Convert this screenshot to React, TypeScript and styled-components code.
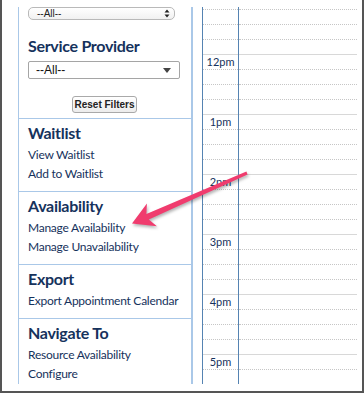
import styled, { createGlobalStyle } from 'styled-components';

const GlobalStyle = createGlobalStyle`
  html, body {
    margin: 0;
    padding: 0;
    background: #ffffff;
  }
  body {
    font-family: Lato, "Open Sans", sans-serif;
    color: #16325c;
  }
`;

const NAV_SECTIONS = [
  { title: 'Waitlist', links: ['View Waitlist', 'Add to Waitlist'] },
  { title: 'Availability', links: ['Manage Availability', 'Manage Unavailability'] },
  { title: 'Export', links: ['Export Appointment Calendar'] },
  { title: 'Navigate To', links: ['Resource Availability', 'Configure'] },
];

// 15 minute slots, an hour line every 4th one
const HOURS = ['12pm', '1pm', '2pm', '3pm', '4pm', '5pm'];
const SLOTS = Array.from({ length: 25 }, (_, i) => ({
  hour: i % 4 === 3,
  label: i % 4 === 3 ? HOURS[(i - 3) / 4] : '',
}));

const App = () => {
  return (
    <>
      <GlobalStyle />
      <Frame>
        <Sidebar>
          <FilterSection>
            <MacSelect>
              <span>--All--</span>
              <svg width="6" height="9" viewBox="0 0 6 9">
                <path d="M3 0.5 L5.5 3.5 H0.5 Z M3 8.5 L5.5 5.5 H0.5 Z" fill="#222" />
              </svg>
            </MacSelect>
            <Heading $filter>Service Provider</Heading>
            <Select>
              <span>--All--</span>
              <svg width="8" height="5" viewBox="0 0 8 5">
                <path d="M0 0 H8 L4 5 Z" fill="#444" />
              </svg>
            </Select>
            <ResetButton>Reset Filters</ResetButton>
          </FilterSection>
          {NAV_SECTIONS.map(section => (
            <NavSection key={section.title}>
              <Heading>{section.title}</Heading>
              {section.links.map(link => (
                <NavLink key={link}>{link}</NavLink>
              ))}
            </NavSection>
          ))}
        </Sidebar>
        <Calendar>
          <TimeColumn>
            <Spacer />
            {SLOTS.map((slot, i) => (
              <Slot key={i} $hour={slot.hour}>
                {slot.label}
              </Slot>
            ))}
          </TimeColumn>
          <DayColumn>
            <Spacer />
            {SLOTS.map((slot, i) => (
              <Slot key={i} $hour={slot.hour} />
            ))}
          </DayColumn>
        </Calendar>
        <Arrow width="364" height="394" viewBox="0 0 364 394">
          <polygon
            points="130,223.5 144.9,203.4 144.4,214 244.4,171.6 245.6,174.4 146.8,219.4 154.9,226.2"
            fill="#f03c6e"
          />
        </Arrow>
      </Frame>
    </>
  );
};

export default App;

const Frame = styled.div`
  position: relative;
  box-sizing: border-box;
  width: 364px;
  height: 393px;
  padding: 7px 5px 7px 16px;
  border: 2px solid #555555;
  border-top: none;
  display: flex;
  gap: 9px;
  background: #ffffff;
`;

const Sidebar = styled.div`
  width: 172px;
  border-left: 1px solid #aac8e8;
  border-right: 2px solid #aac8e8;
  overflow: hidden;
`;

const FilterSection = styled.div`
  padding: 0 10px 5px 9px;
  display: flex;
  flex-direction: column;
  align-items: flex-start;
`;

const MacSelect = styled.div`
  box-sizing: border-box;
  width: 147px;
  height: 13px;
  border: 1px solid #b9b9b9;
  border-radius: 5px;
  background: linear-gradient(#ffffff, #f1f1f1);
  display: flex;
  align-items: center;
  justify-content: space-between;
  padding: 0 4px 0 8px;
  font-family: "Liberation Sans", Arial, sans-serif;
  font-size: 10px;
  color: #222;
`;

const Select = styled.div`
  box-sizing: border-box;
  width: 152px;
  height: 18px;
  border: 1px solid #a5a5a5;
  border-radius: 2px;
  background: #ffffff;
  display: flex;
  align-items: center;
  justify-content: space-between;
  padding: 0 8px 0 7px;
  font-family: "Liberation Sans", Arial, sans-serif;
  font-size: 12px;
  color: #111;
`;

const ResetButton = styled.button`
  align-self: center;
  margin-top: 17px;
  box-sizing: border-box;
  width: 65px;
  height: 17px;
  padding: 0;
  border: 1px solid #a9a9a9;
  border-radius: 3px;
  background: linear-gradient(#ffffff, #ececec);
  font-family: "Liberation Sans", Arial, sans-serif;
  font-size: 10px;
  font-weight: bold;
  color: #222;
`;

const NavSection = styled.div`
  border-top: 1px solid #aac8e8;
  padding: 4px 10px 8px 9px;
`;

const Heading = styled.div<{ $filter?: boolean }>`
  font-size: 16px;
  line-height: 20px;
  font-weight: bold;
  letter-spacing: -0.3px;
  color: #16325c;
  margin: ${p => (p.$filter ? '16px 0 5px' : '0 0 2px')};
`;

const NavLink = styled.div`
  font-size: 12px;
  line-height: 19px;
  letter-spacing: -0.25px;
  color: #16325c;
  white-space: nowrap;
`;

const Calendar = styled.div`
  flex: 1;
  display: flex;
  overflow: hidden;
`;

const TimeColumn = styled.div`
  width: 35px;
  border-left: 1px solid #5583b2;
  border-right: 1px solid #5583b2;
`;

const DayColumn = styled.div`
  flex: 1;
`;

const Spacer = styled.div`
  height: 2px;
`;

const Slot = styled.div<{ $hour: boolean }>`
  box-sizing: border-box;
  height: 15px;
  border-top: 1px ${p => (p.$hour ? 'solid #d8d8d8' : 'dotted #c6c6c6')};
  font-size: 11px;
  line-height: 13px;
  text-align: center;
  color: #16325c;
  white-space: nowrap;
`;

const Arrow = styled.svg`
  position: absolute;
  left: 0;
  top: 0;
  pointer-events: none;
  filter: drop-shadow(1px 2px 1.5px rgba(0, 0, 0, 0.3));
`;
